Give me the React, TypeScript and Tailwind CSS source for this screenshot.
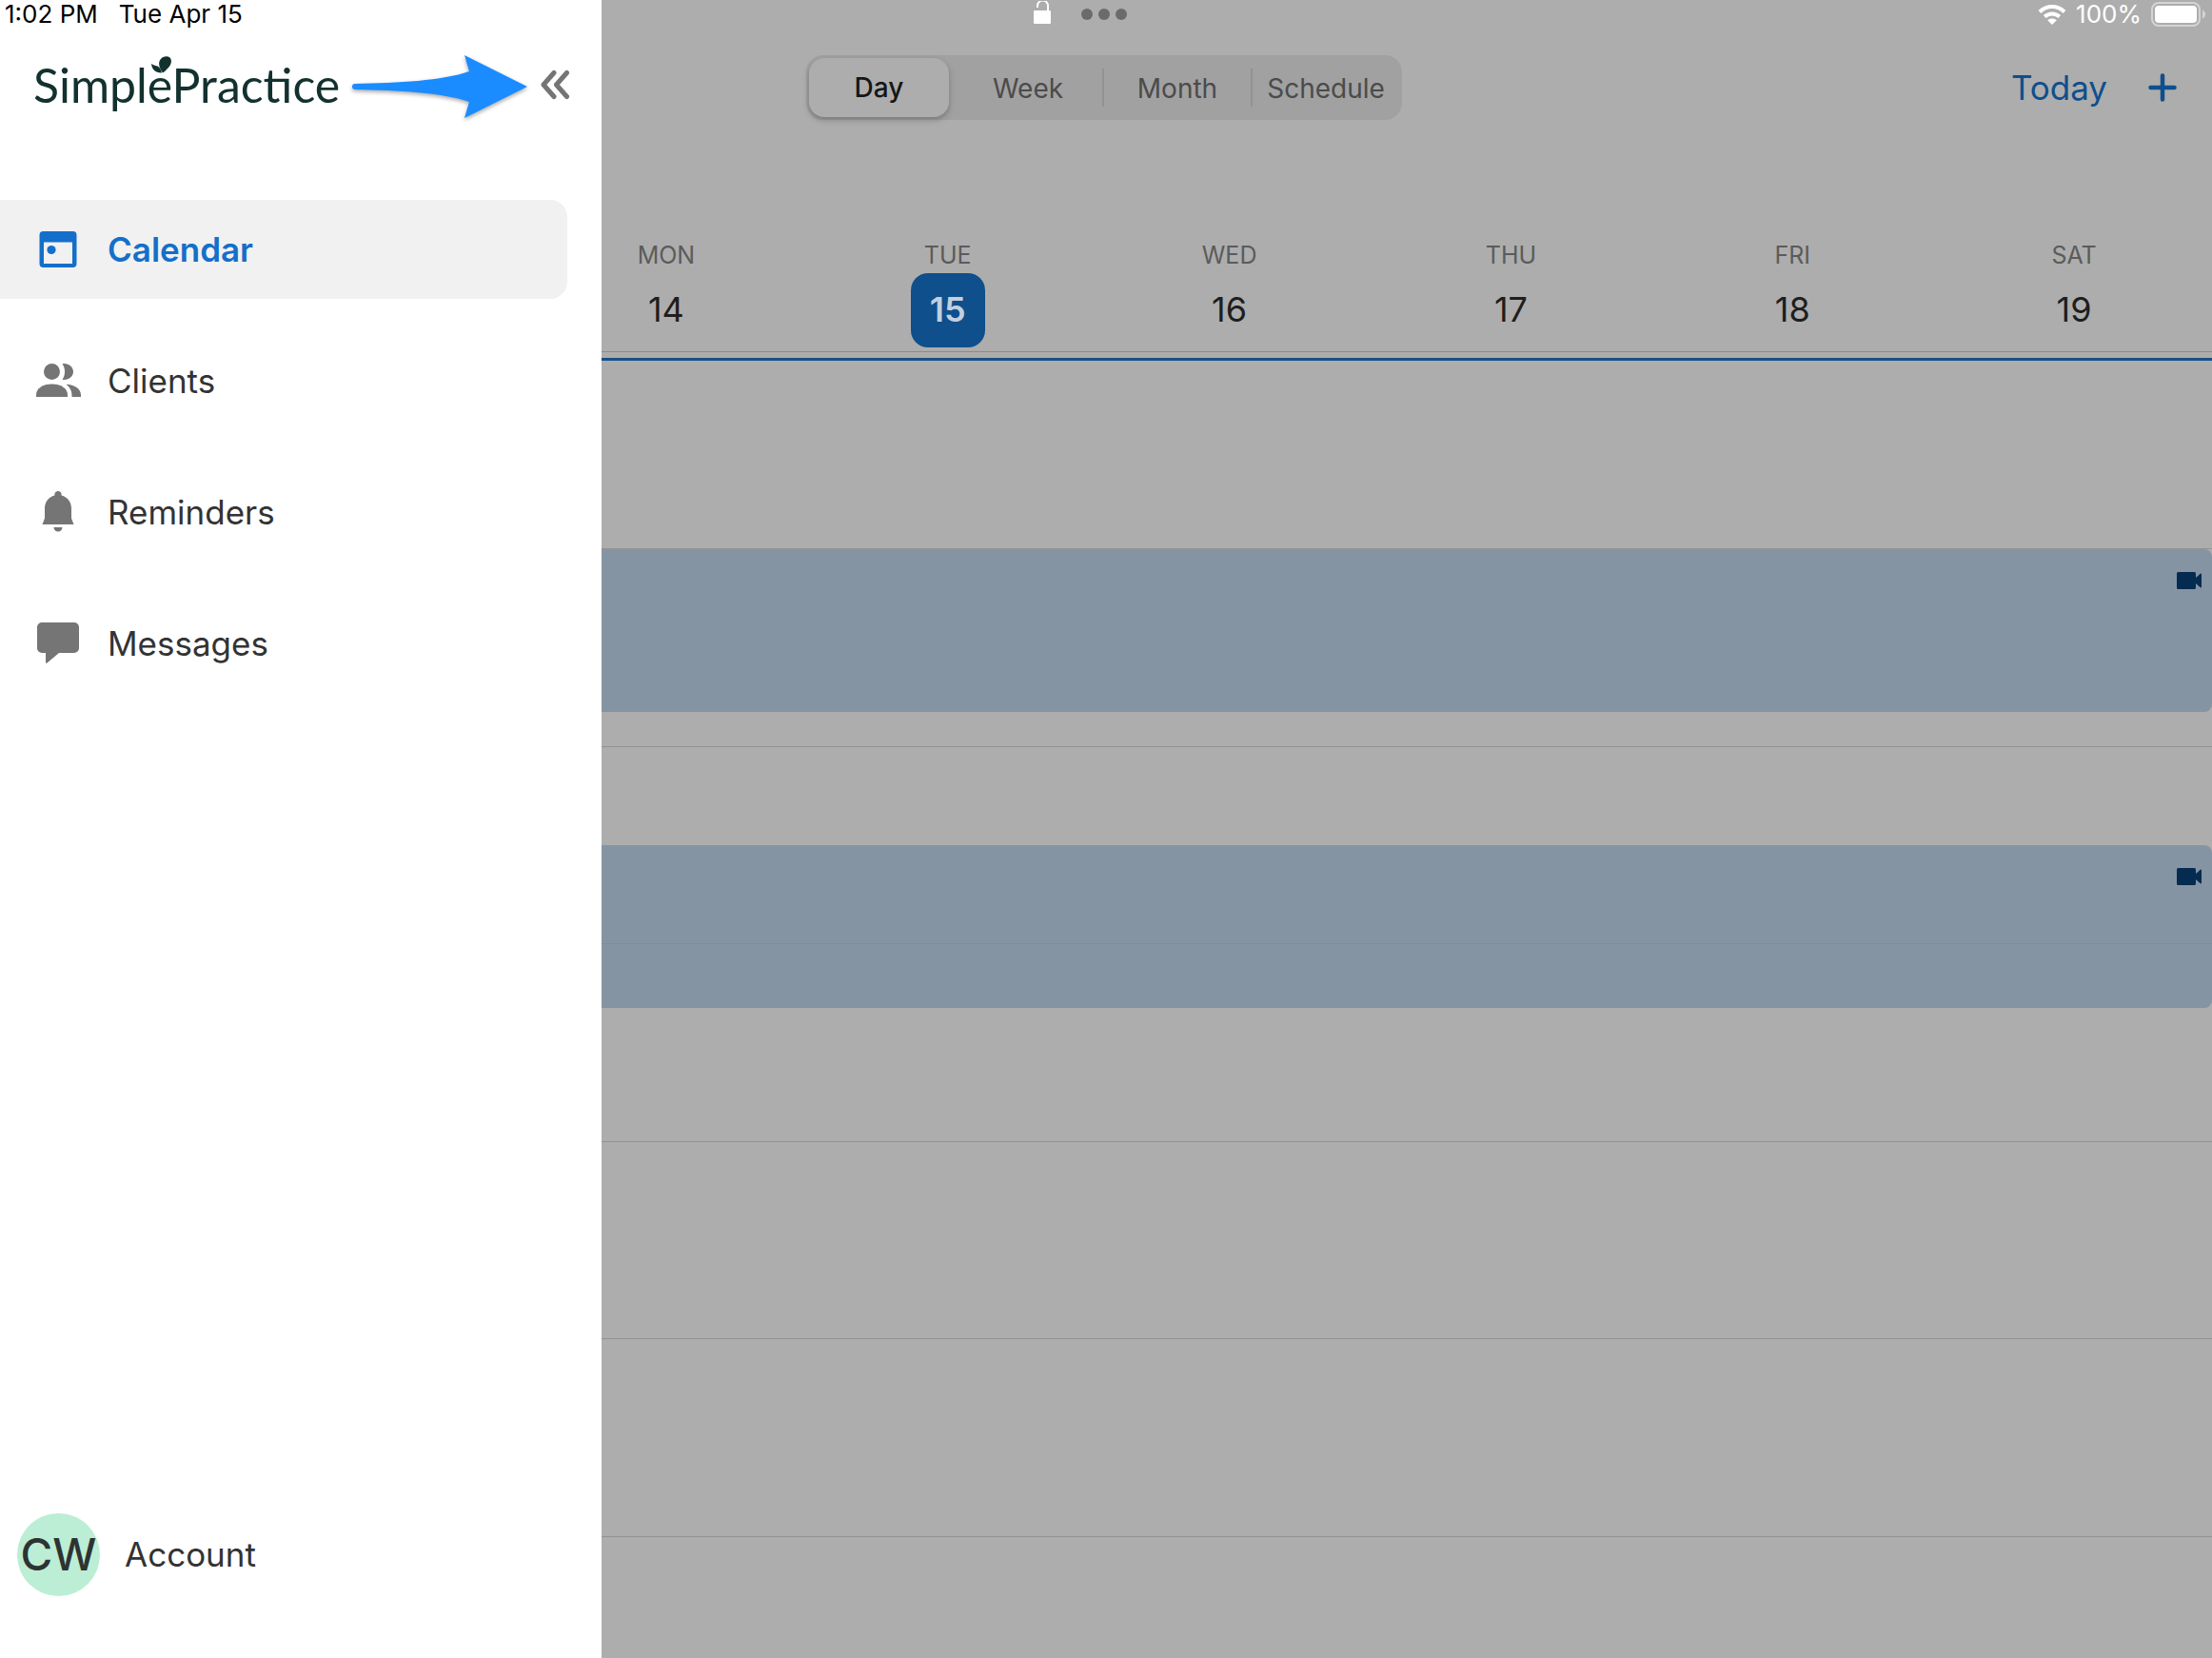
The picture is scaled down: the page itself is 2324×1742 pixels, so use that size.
import { useState } from "react";
import type { ReactNode } from "react";
import { clsx } from "clsx";

type NavItem = {
  label: string;
  icon: ReactNode;
};

type Day = {
  name: string;
  date: number;
};

const days: Day[] = [
  { name: "MON", date: 14 },
  { name: "TUE", date: 15 },
  { name: "WED", date: 16 },
  { name: "THU", date: 17 },
  { name: "FRI", date: 18 },
  { name: "SAT", date: 19 },
];

const views = ["Day", "Week", "Month", "Schedule"];

// each row is one hour, event says where in the hour it starts
const hours: { id: number; event?: "start" | "half" }[] = [
  { id: 13 },
  { id: 14, event: "start" },
  { id: 15, event: "half" },
  { id: 16 },
  { id: 17 },
  { id: 18 },
  { id: 19 },
];

const CalendarIcon = () => (
  <svg viewBox="0 0 48 48" className="size-12" fill="currentColor">
    <path
      fillRule="evenodd"
      d="M8.500 5h31a4 4 0 0 1 4 4v30a4 4 0 0 1-4 4h-31a4 4 0 0 1-4-4V9a4 4 0 0 1 4-4zM9 16.500V39h30V16.500z"
    />
    <circle cx="17" cy="24.500" r="4.600" />
  </svg>
);

const ClientsIcon = () => (
  <svg viewBox="0 0 48 48" className="size-12" fill="currentColor">
    <circle cx="17.500" cy="14.500" r="8.500" />
    <path d="M1 41v-2c0-7 7-11.500 16.500-11.500S34 32 34 39v2z" />
    <path d="M28.500 6.200c6-1.200 11.500 2.800 11.500 8.300s-5.500 9.500-11.500 8.300c3.400-4.800 3.400-11.800 0-16.600z" />
    <path d="M32.500 27.700C41 28.200 48 32 48 39v2h-9.500v-2c0-4.500-2.300-8.500-6-11.300z" />
  </svg>
);

const BellIcon = () => (
  <svg viewBox="0 0 48 48" className="size-12" fill="currentColor">
    <path d="M24 2c2 0 3.600 1.500 3.600 3.500v.9C34 8 38 13.500 38 20v10.500L40.500 37H7.500L10 30.500V20c0-6.500 4-12 10.400-13.600v-.9C20.400 3.500 22 2 24 2z" />
    <path d="M19.500 40h9c0 2.600-2 4.500-4.500 4.500s-4.500-1.900-4.500-4.500z" />
  </svg>
);

const MessageIcon = () => (
  <svg viewBox="0 0 48 48" className="size-12" fill="currentColor">
    <path d="M7 2h34a5 5 0 0 1 5 5v22a5 5 0 0 1-5 5H25L12.500 44.500a1 1 0 0 1-1.500-.8V34H7a5 5 0 0 1-5-5V7a5 5 0 0 1 5-5z" />
  </svg>
);

const navItems: NavItem[] = [
  { label: "Calendar", icon: <CalendarIcon /> },
  { label: "Clients", icon: <ClientsIcon /> },
  { label: "Reminders", icon: <BellIcon /> },
  { label: "Messages", icon: <MessageIcon /> },
];

const Logo = () => (
  <div className="relative font-['Lato',sans-serif] text-[50px] leading-16 text-[#12312f]">
    SimplePractice
    <svg
      viewBox="0 0 22 18"
      className="absolute top-0.5 left-31 h-[18px] w-[22px]"
      fill="currentColor"
    >
      <path d="M12 17.500C8 12 7 7 9.500 3.500 12 0 17-.5 19.500 1.500 22 4 21 9 18 12c-1.500 1.500-3.500 4-6 5.500z" />
      <path d="M0 8c3 2 6 2 8 3.500 1.500 1.500 2.500 4 3 6C5 18 .5 14 0 8z" />
    </svg>
  </div>
);

const Arrow = () => (
  <svg
    viewBox="0 -4 186 70"
    className="h-[70px] w-[186px] shrink-0 overflow-visible drop-shadow-[0_2px_2px_rgba(0,0,0,0.35)]"
    fill="#1a8cff"
  >
    <path d="M4 30C50 29 95 27 124 17L119 0L185 33L119 66L124 49C95 39 50 37 4 36A3 3 0 0 1 4 30Z" />
  </svg>
);

const VideoIcon = () => (
  <svg viewBox="0 0 26 18" className="h-[18px] w-[26px]" fill="#062b50">
    <path d="M1.500 0h17A1.500 1.500 0 0 1 20 1.500V6l4.500-4c.8-.7 1.500-.4 1.500.5v13c0 .9-.7 1.200-1.500.5L20 12v4.500a1.500 1.500 0 0 1-1.500 1.500h-17A1.500 1.500 0 0 1 0 16.500v-15A1.500 1.500 0 0 1 1.500 0z" />
  </svg>
);

const Sidebar = () => {
  const [active, setActive] = useState("Calendar");

  return (
    <aside className="absolute inset-y-0 left-0 z-20 flex w-[632px] flex-col bg-white">
      <div className="flex h-8 items-center gap-[22px] pb-0.5 pl-[5px] text-[26px] leading-[30px] text-black">
        <span>1:02 PM</span>
        <span>Tue Apr 15</span>
      </div>

      <div className="flex h-[114px] items-center gap-3 pl-[35px]">
        <Logo />
        <Arrow />
        <button aria-label="Collapse menu" className="text-[#757575]">
          <svg
            viewBox="0 0 32 32"
            className="size-8"
            fill="none"
            stroke="currentColor"
            strokeWidth="5"
            strokeLinecap="round"
            strokeLinejoin="round"
          >
            <path d="M15 3.500 4 16l11 12.500M28.500 3.500 17.500 16l11 12.500" />
          </svg>
        </button>
      </div>

      <nav className="flex flex-col gap-[34px] pt-16 pr-9">
        {navItems.map((item) => (
          <button
            key={item.label}
            onClick={() => setActive(item.label)}
            className={clsx(
              "flex h-[104px] items-center gap-7 rounded-r-[18px] pl-[37px] text-[35px]",
              active === item.label
                ? "bg-[#f1f1f1] font-semibold text-[#146fca]"
                : "text-[#333333]"
            )}
          >
            <span
              className={clsx(
                active === item.label ? "text-[#146fca]" : "text-[#757575]"
              )}
            >
              {item.icon}
            </span>
            {item.label}
          </button>
        ))}
      </nav>

      <button className="mt-auto mb-[65px] flex items-center gap-[26px] pl-[18px] text-[35px] text-[#333333]">
        <span className="flex size-[87px] items-center justify-center rounded-full bg-[#bbeed5] text-[46px] font-medium text-[#2e3332]">
          CW
        </span>
        Account
      </button>
    </aside>
  );
};

const StatusBar = () => (
  <div className="grid h-8 grid-cols-[1fr_auto_1fr] items-center pr-1 pb-0.5">
    <div className="flex justify-end pr-8">
      <svg viewBox="0 0 18 28" className="h-7 w-[18px]" fill="white">
        <rect y="10" width="18" height="14" rx="1" />
        <path
          d="M4 7V5a5 5 0 0 1 11 0v6"
          fill="none"
          stroke="white"
          strokeWidth="2"
        />
      </svg>
    </div>
    <div className="flex gap-[6px]">
      <span className="size-3 rounded-full bg-[#6b6b6b]" />
      <span className="size-3 rounded-full bg-[#6b6b6b]" />
      <span className="size-3 rounded-full bg-[#6b6b6b]" />
    </div>
    <div className="flex items-center justify-end gap-[10px] pr-[2px] text-[26px] leading-[30px] text-white">
      <svg viewBox="0 0 30 22" className="h-[22px] w-[30px]" fill="none">
        <path
          d="M2 8.500c7.500-7.200 18.500-7.200 26 0M7.200 13.600c4.600-4.200 11-4.200 15.600 0"
          stroke="white"
          strokeWidth="4"
        />
        <path d="m15 22-4.800-4.700c2.700-2.400 6.900-2.400 9.600 0z" fill="white" />
      </svg>
      <span>100%</span>
      <svg viewBox="0 0 58 26" className="h-[26px] w-[58px]" fill="none">
        <rect
          x="1"
          y="1"
          width="50"
          height="24"
          rx="7"
          stroke="#d4d4d4"
          strokeWidth="2"
        />
        <rect x="4" y="4" width="44" height="18" rx="4" fill="white" />
        <path d="M54 8.500c4 1.500 4 7.500 0 9z" fill="#d4d4d4" />
      </svg>
    </div>
  </div>
);

const Toolbar = () => {
  const [view, setView] = useState("Day");

  return (
    <div className="grid h-30 grid-cols-[1fr_auto_1fr] items-center pr-1">
      <div />
      <div className="flex h-[68px] items-center rounded-[18px] bg-[#a1a1a1] p-[3px]">
        {views.map((v, i) => (
          <div
            key={v}
            className={clsx(
              "flex items-center",
              i === 0 ? "w-[152px]" : "w-[156px]",
              i > 1 && "border-l-2 border-[#929292]"
            )}
          >
            <button
              onClick={() => setView(v)}
              className={clsx(
                "text-[28px]",
                v === view
                  ? "h-[62px] w-[147px] rounded-2xl bg-[#adadad] font-medium text-[#161616] shadow-[0_3px_6px_rgba(0,0,0,0.25)]"
                  : "h-10 w-full text-[#4b4b4b]"
              )}
            >
              {v}
            </button>
          </div>
        ))}
      </div>
      <div className="flex items-center justify-end gap-[43px] pr-[33px] text-[#0e4f8c]">
        <button className="text-[35px]">Today</button>
        <button aria-label="Add">
          <svg
            viewBox="0 0 30 30"
            className="size-[30px]"
            fill="none"
            stroke="currentColor"
            strokeWidth="4.500"
            strokeLinecap="round"
          >
            <path d="M15 2.500v25M2.500 15h25" />
          </svg>
        </button>
      </div>
    </div>
  );
};

const WeekHeader = () => (
  <div className="-mr-[3px] grid grid-cols-6 pt-[98px] pb-1 pl-[552px]">
    {days.map((day) => (
      <div key={day.date} className="flex flex-col items-center">
        <span className="text-[25px] leading-[37px] text-[#5b5b5b]">
          {day.name}
        </span>
        <button
          className={clsx(
            "size-[78px] rounded-[18px] pb-0.5 text-4xl",
            day.date === 15
              ? "bg-[#0e4f8c] font-semibold text-[#c3d0de]"
              : "text-[#1e1e1e]"
          )}
        >
          {day.date}
        </button>
      </div>
    ))}
  </div>
);

const HourGrid = () => (
  <div className="relative flex-1 overflow-hidden">
    {/* current time */}
    <div className="absolute inset-x-0 top-[6px] z-10 h-[3px] bg-[#175087]" />
    <div className="grid h-[1452px] grid-rows-7">
      {hours.map((hour) => (
        <div key={hour.id} className="relative border-b border-[#929292]">
          {hour.event && (
            <div
              className={clsx(
                "absolute inset-x-0 z-10 flex h-[171px] items-start justify-end rounded-r-lg bg-[#8594a3] pt-6 pr-[11px]",
                hour.event === "half" ? "top-1/2" : "top-0"
              )}
            >
              {hour.event === "half" && (
                <div className="absolute inset-x-0 top-[103px] h-px bg-[#7c8c9c]" />
              )}
              <VideoIcon />
            </div>
          )}
        </div>
      ))}
    </div>
  </div>
);

const App = () => {
  return (
    <div className="relative h-screen overflow-hidden bg-[#adadad] font-['Inter',sans-serif]">
      <Sidebar />
      <main className="flex h-full flex-col">
        <StatusBar />
        <Toolbar />
        <WeekHeader />
        <div className="h-px shrink-0 bg-[#8c8c8c]" />
        <HourGrid />
      </main>
    </div>
  );
};

export default App;
